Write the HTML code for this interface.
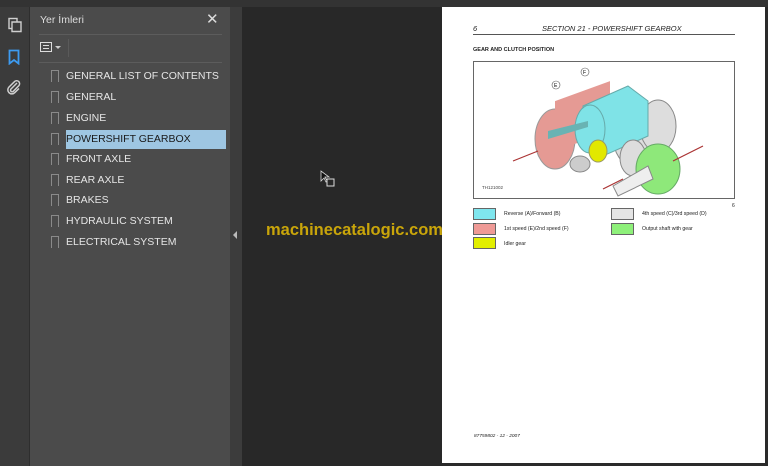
<!DOCTYPE html>
<html><head><style>
*{margin:0;padding:0;box-sizing:border-box}
body{width:768px;height:466px;background:#2a2a2a;font-family:"Liberation Sans",sans-serif;position:relative;overflow:hidden}
.abs{position:absolute}
#top{left:0;top:0;width:768px;height:7px;background:#333}
#tb{left:0;top:7px;width:30px;height:459px;background:#3b3b3b;border-right:1px solid #2e2e2e}
#panel{left:30px;top:7px;width:200px;height:459px;background:#4b4b4b}
#strip{left:230px;top:7px;width:12px;height:459px;background:#3c3c3c}
#mid{left:242px;top:7px;width:200px;height:459px;background:#282828}
#page{left:442px;top:7px;width:323px;height:456px;background:#fff}
.bm{position:absolute;left:36px;color:#e6e6e6;font-size:10.5px;height:18px;line-height:18px}
.bm i{position:absolute;left:-15px;top:3px;width:8px;height:12px;border:1.3px solid #8a8a8a;border-bottom:none}
.pt{font-family:"Liberation Sans",sans-serif;color:#222}
</style></head><body>
<div id="top" class="abs"></div>
<div id="tb" class="abs">
 <svg class="abs" style="left:7px;top:10px" width="16" height="16" viewBox="0 0 16 16" fill="none" stroke="#cfcfcf" stroke-width="1.4"><rect x="2" y="1.5" width="8" height="10"/><path d="M5 5v9.5h9V5z" fill="#3b3b3b"/></svg>
 <svg class="abs" style="left:8px;top:42px" width="12" height="16" viewBox="0 0 12 16" fill="none" stroke="#3d9bf0" stroke-width="1.8"><path d="M1.5 1.5h9v13l-4.5-3.5-4.5 3.5z"/></svg>
 <svg class="abs" style="left:6px;top:72px" width="16" height="16" viewBox="0 0 16 16" fill="none" stroke="#cfcfcf" stroke-width="1.5"><path d="M11 4L5 10a1.6 1.6 0 0 0 2.3 2.3L13 6.5a3 3 0 0 0-4.2-4.2L3 8a4 4 0 0 0 5.7 5.7L13 9.5"/></svg>
</div>
<div id="panel" class="abs">
 <div class="abs" style="left:10px;top:7px;color:#ddd;font-size:10.5px">Yer İmleri</div>
 <div class="abs" style="left:176px;top:3px;color:#ddd;font-size:15px">✕</div>
 <div class="abs" style="left:9px;top:27px;width:183px;height:1px;background:#5c5c5c"></div>
 <div class="abs" style="left:10px;top:35px;width:12px;height:10px;border:1.3px solid #ddd"></div>
 <div class="abs" style="left:13px;top:38px;width:6px;height:1px;background:#ddd;box-shadow:0 3px 0 #ddd"></div>
 <div class="abs" style="left:25px;top:39px;border:3px solid transparent;border-top:3px solid #ccc"></div>
 <div class="abs" style="left:38px;top:32px;width:1px;height:18px;background:#5a5a5a"></div>
 <div class="abs" style="left:9px;top:55px;width:183px;height:1px;background:#5c5c5c"></div>
 <div class="bm" style="top:60px"><i></i>GENERAL LIST OF CONTENTS</div>
 <div class="bm" style="top:81px"><i></i>GENERAL</div>
 <div class="bm" style="top:102px"><i></i>ENGINE</div>
 <div class="abs" style="left:36px;top:123px;width:160px;height:19px;background:#9ec6e2"></div>
 <div class="bm" style="top:123px;color:#1a1a1a"><i></i>POWERSHIFT GEARBOX</div>
 <div class="bm" style="top:143px"><i></i>FRONT AXLE</div>
 <div class="bm" style="top:164px"><i></i>REAR AXLE</div>
 <div class="bm" style="top:184px"><i></i>BRAKES</div>
 <div class="bm" style="top:205px"><i></i>HYDRAULIC SYSTEM</div>
 <div class="bm" style="top:226px"><i></i>ELECTRICAL SYSTEM</div>
</div>
<div id="strip" class="abs"><div class="abs" style="left:3px;top:224px;border:4px solid transparent;border-right:4px solid #bbb;border-left:none"></div></div>
<div id="mid" class="abs">
 <svg class="abs" style="left:78px;top:163px" width="18" height="18" viewBox="0 0 18 18"><path d="M1 1v10l3-3 2 4 1-1-2-4h4z" fill="#111" stroke="#ddd" stroke-width="0.8"/><rect x="7" y="9" width="7" height="7" fill="none" stroke="#ddd" stroke-width="1"/></svg>
</div>
<div id="page" class="abs">
 <div class="abs pt" style="left:31px;top:17px;font-size:7.5px;font-style:italic">6</div>
 <div class="abs pt" style="left:100px;top:17px;font-size:7.5px;font-style:italic">SECTION 21 - POWERSHIFT GEARBOX</div>
 <div class="abs" style="left:31px;top:27px;width:262px;height:1px;background:#555"></div>
 <div class="abs pt" style="left:31px;top:40px;font-size:5.5px;font-weight:bold">GEAR AND CLUTCH POSITION</div>
 <div class="abs" style="left:31px;top:54px;width:262px;height:138px;border:1px solid #666"></div>
 <svg class="abs" style="left:31px;top:54px" width="262" height="138" viewBox="0 0 262 138">
  <ellipse cx="82" cy="78" rx="20" ry="30" fill="#e59a94" stroke="#999"/>
  <rect x="82" y="40" width="55" height="50" fill="#e59a94" transform="skewY(-20) translate(0,30)"/>
  <ellipse cx="160" cy="75" rx="20" ry="30" fill="#ddd" stroke="#888"/>
  <ellipse cx="185" cy="65" rx="18" ry="26" fill="#ddd" stroke="#888"/>
  <path d="M110 45 L155 25 L175 40 L175 75 L130 95 L110 85Z" fill="#7fe3e7" stroke="#6aa"/>
  <ellipse cx="117" cy="68" rx="15" ry="24" fill="#7fe3e7" stroke="#6aa"/>
  <path d="M75 70 L115 60 L115 66 L75 78Z" fill="#69b3b3"/>
  <ellipse cx="125" cy="90" rx="9" ry="11" fill="#e2e800" stroke="#996"/>
  <ellipse cx="160" cy="97" rx="13" ry="18" fill="#ddd" stroke="#888"/>
  <ellipse cx="185" cy="108" rx="22" ry="25" fill="#8ee87a" stroke="#6a6"/>
  <path d="M140 125 L175 105 L180 118 L145 135Z" fill="#eee" stroke="#888"/>
  <ellipse cx="107" cy="103" rx="10" ry="8" fill="#ccc" stroke="#888"/>
  <path d="M40 100 L65 90" stroke="#a33" stroke-width="1.2"/>
  <path d="M200 100 L230 85" stroke="#a33" stroke-width="1.2"/>
  <path d="M130 128 L150 118" stroke="#a33" stroke-width="1.2"/>
  <circle cx="112" cy="11" r="4" fill="#fff" stroke="#555" stroke-width="0.6"/>
  <text x="110" y="13" font-size="5" font-family="Liberation Sans">F</text>
  <circle cx="83" cy="24" r="4" fill="#fff" stroke="#555" stroke-width="0.6"/>
  <text x="81" y="26" font-size="5" font-family="Liberation Sans">E</text>
  <text x="9" y="128" font-size="4.5" font-family="Liberation Sans" fill="#444">TH121002</text>
 </svg>
 <div class="abs pt" style="left:290px;top:196px;font-size:5px">6</div>
 <div class="abs" style="left:31px;top:201px;width:23px;height:12px;background:#7fe6ee;border:1px solid #666"></div>
 <div class="abs" style="left:31px;top:216px;width:23px;height:12px;background:#ef9a96;border:1px solid #666"></div>
 <div class="abs" style="left:31px;top:230px;width:23px;height:12px;background:#e2ef00;border:1px solid #666"></div>
 <div class="abs" style="left:169px;top:201px;width:23px;height:12px;background:#e4e4e4;border:1px solid #666"></div>
 <div class="abs" style="left:169px;top:216px;width:23px;height:12px;background:#8ef07a;border:1px solid #666"></div>
 <div class="abs pt" style="left:62px;top:204px;font-size:5.2px">Reverse (A)/Forward (B)</div>
 <div class="abs pt" style="left:62px;top:219px;font-size:5.2px">1st speed (E)/2nd speed (F)</div>
 <div class="abs pt" style="left:62px;top:234px;font-size:5.2px">Idler gear</div>
 <div class="abs pt" style="left:200px;top:204px;font-size:5.2px">4th speed (C)/3rd speed (D)</div>
 <div class="abs pt" style="left:200px;top:219px;font-size:5.2px">Output shaft with gear</div>
 <div class="abs pt" style="left:32px;top:427px;font-size:4.8px;font-style:italic">87759802 - 12 - 2007</div>
</div>
<div class="abs" style="left:266px;top:221px;color:#c9a50a;font-weight:bold;font-size:16.5px;z-index:5">machinecatalogic.com</div>
</body></html>
